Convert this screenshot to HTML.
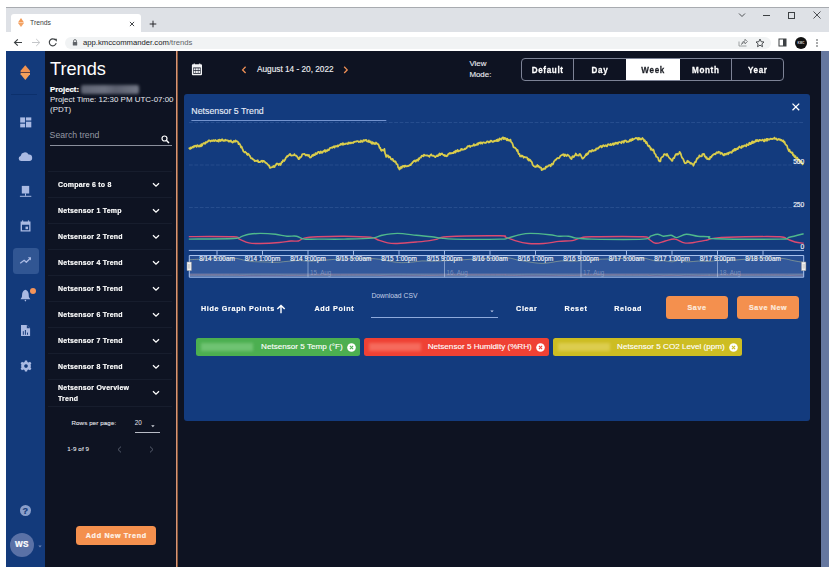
<!DOCTYPE html>
<html><head><meta charset="utf-8">
<style>
*{box-sizing:border-box;margin:0;padding:0}
html,body{width:838px;height:576px;overflow:hidden;background:#fff;font-family:"Liberation Sans",sans-serif}
.a{position:absolute}
.t{position:absolute;white-space:nowrap;line-height:1}
.b{font-weight:bold;-webkit-text-stroke:0.22px currentColor}
.m{-webkit-text-stroke:0.12px currentColor}
.sy{transform:scaleY(1.14);transform-origin:0 85%}
.sy2{transform:scaleY(1.1);transform-origin:0 85%;-webkit-text-stroke:0.16px currentColor}
</style></head><body>
<!-- window frame -->
<div class="a" style="left:6px;top:7px;width:823px;height:1px;background:#a8abb0"></div>
<div class="a" style="left:6px;top:8px;width:823px;height:24px;background:#dee1e6"></div>
<!-- tab -->
<div class="a" style="left:11px;top:14px;width:130px;height:18px;background:#fff;border-radius:3px 3px 0 0"></div>
<div class="a" style="left:6px;top:32px;width:823px;height:19.5px;background:#fff"></div>
<div class="a" style="left:64.5px;top:36.5px;width:706px;height:12.5px;background:#f1f3f4;border-radius:7px"></div>


<!-- tab content -->
<svg class="a" style="left:17px;top:17px" width="8" height="11" viewBox="0 0 8 11"><path d="M4 1 L7 5.4 L1 5.4 Z" fill="#f39a55"/><path d="M1 5.9 L7 5.9 L4 10 Z" fill="#f3a466"/></svg>
<div class="t" style="left:30px;top:19.5px;font-size:6.8px;color:#3c4043">Trends</div>
<svg class="a" style="left:129px;top:20.5px" width="6" height="6" viewBox="0 0 6 6"><path d="M0.9 0.9 L5.1 5.1 M5.1 0.9 L0.9 5.1" stroke="#3c4043" stroke-width="0.95"/></svg>
<svg class="a" style="left:148.5px;top:19.5px" width="8" height="8" viewBox="0 0 8 8"><path d="M4 0.7 V7.3 M0.7 4 H7.3" stroke="#202124" stroke-width="0.95"/></svg>
<!-- window controls -->
<svg class="a" style="left:738px;top:12px" width="8" height="6" viewBox="0 0 8 6"><path d="M1 1.5 L4 4.5 L7 1.5" stroke="#3c4043" stroke-width="0.9" fill="none"/></svg>
<div class="a" style="left:763px;top:15px;width:7px;height:1px;background:#3c4043"></div>
<div class="a" style="left:788px;top:11.5px;width:7px;height:7px;border:1px solid #3c4043"></div>
<svg class="a" style="left:813px;top:11px" width="8" height="8" viewBox="0 0 8 8"><path d="M0.5 0.5 L7.5 7.5 M7.5 0.5 L0.5 7.5" stroke="#3c4043" stroke-width="0.9"/></svg>
<!-- toolbar icons -->
<svg class="a" style="left:13px;top:38px" width="10" height="9" viewBox="0 0 10 9"><path d="M9 4.5 H1.8 M4.8 1.3 L1.5 4.5 L4.8 7.7" stroke="#3c4043" stroke-width="1.15" fill="none"/></svg>
<svg class="a" style="left:31px;top:38px" width="10" height="9" viewBox="0 0 10 9"><path d="M1 4.5 H8.5 M5.2 1 L8.8 4.5 L5.2 8" stroke="#c4c6c9" stroke-width="1" fill="none"/></svg>
<svg class="a" style="left:48px;top:37.5px" width="10" height="9" viewBox="0 0 10 9"><path d="M7.6 2.2 A3.5 3.5 0 1 0 8.2 5.2" stroke="#3c4043" stroke-width="1.15" fill="none"/><path d="M5.8 0.8 L8.8 0.8 L8.8 3.8 Z" fill="#3c4043"/></svg>
<svg class="a" style="left:71.5px;top:38.5px" width="6" height="7" viewBox="0 0 6 7"><path d="M1.6 3 V2 A1.4 1.4 0 0 1 4.4 2 V3" stroke="#5f6368" stroke-width="0.9" fill="none"/><rect x="0.8" y="3" width="4.4" height="3.6" rx="0.5" fill="#5f6368"/></svg>
<div class="t" style="left:83px;top:38.5px;font-size:7.7px;color:#202124">app.kmccommander.com<span style="color:#5f6368">/trends</span></div>
<svg class="a" style="left:738px;top:38px" width="10" height="9" viewBox="0 0 10 9"><path d="M1 3.5 V8 H8.5" stroke="#8a8d91" stroke-width="0.8" fill="none"/><path d="M3.5 6.5 Q4 3 7 3 V1.2 L9.4 3.6 L7 6 V4.3 Q5 4.3 3.5 6.5Z" stroke="#6e7174" stroke-width="0.8" fill="none"/></svg>
<svg class="a" style="left:755px;top:37.5px" width="10" height="10" viewBox="0 0 10 10"><path d="M5 1 L6.2 3.7 L9 4 L6.9 5.9 L7.5 8.7 L5 7.2 L2.5 8.7 L3.1 5.9 L1 4 L3.8 3.7 Z" stroke="#3c4043" stroke-width="0.9" fill="none" stroke-linejoin="round"/></svg>
<svg class="a" style="left:777.5px;top:38px" width="9" height="9" viewBox="0 0 9 9"><rect x="1" y="1" width="7" height="7" stroke="#3c4043" stroke-width="1" fill="none"/><rect x="5" y="1" width="3" height="7" fill="#3c4043"/></svg>
<div class="a" style="left:794.5px;top:36.5px;width:12px;height:12px;border-radius:50%;background:#111"></div>
<svg class="a" style="left:794.5px;top:36.5px" width="12" height="12" viewBox="0 0 12 12"><text x="6" y="7" font-family="Liberation Sans" font-size="3" font-weight="bold" fill="#d8d8d8" text-anchor="middle">KMC</text></svg>
<svg class="a" style="left:815px;top:37.5px" width="4" height="10" viewBox="0 0 4 10"><circle cx="2" cy="2" r="0.8" fill="#3c4043"/><circle cx="2" cy="5" r="0.8" fill="#3c4043"/><circle cx="2" cy="8" r="0.8" fill="#3c4043"/></svg>

<!-- page -->
<div class="a" style="left:6px;top:51px;width:823px;height:516px;background:#0e1322"></div>
<div class="a" style="left:6px;top:51px;width:39px;height:516px;background:#133a7b"></div>
<div class="a" style="left:176px;top:51px;width:1px;height:516px;background:#d4957a"></div><div class="a" style="left:177px;top:51px;width:1px;height:516px;background:#8a5535"></div>
<div class="a" style="left:821px;top:51px;width:8px;height:516px;background:#65779f"></div>
<div class="a" style="left:183.5px;top:93.5px;width:626.5px;height:327px;background:#133b7e;border-radius:3px"></div>

<!-- sidebar icons -->
<svg class="a" style="left:20px;top:65px" width="11" height="16" viewBox="0 0 11 16"><path d="M5.3 0.3 L10 5.8 V7.2 H0.6 V5.8 Z" fill="#f3934f"/><path d="M0.6 7.9 H10 V9.3 L5.3 14.9 L0.6 9.3 Z" fill="#f5a15c"/><rect x="0.6" y="7.1" width="9.4" height="0.85" fill="#6a4038"/></svg>
<div class="a" style="left:11px;top:94px;width:25.5px;height:1px;background:#0c306c"></div>
<svg class="a" style="left:20px;top:116.5px" width="12" height="11" viewBox="0 0 12 11"><g fill="#aabae3"><rect x="0.2" y="0.4" width="4.9" height="5.2"/><rect x="0.2" y="6.7" width="4.9" height="3.7"/><rect x="6" y="0.4" width="5.3" height="3.1"/><rect x="6" y="4.7" width="5.3" height="5.7"/></g></svg>
<svg class="a" style="left:18px;top:151px" width="15" height="11" viewBox="0 0 15 11"><path d="M3.2 10 A2.6 2.6 0 0 1 2.6 4.9 A4.3 4.3 0 0 1 10.6 3.6 A3.2 3.2 0 0 1 11.3 10 Z" fill="#aabae3"/></svg>
<svg class="a" style="left:19px;top:185px" width="13" height="13" viewBox="0 0 13 13"><g fill="#aabae3"><rect x="2.8" y="0.9" width="7.4" height="7.6"/><rect x="6" y="8.4" width="1" height="2.4"/><rect x="0.9" y="10.8" width="11.4" height="1"/></g></svg>
<svg class="a" style="left:20px;top:219.5px" width="11" height="12" viewBox="0 0 11 12"><path fill="#aabae3" fill-rule="evenodd" d="M0.6 1.4 H10.5 V11.5 H0.6 Z M2 4.8 V10.2 H9.2 V4.8 Z"/><rect x="2" y="0.4" width="1.2" height="1.5" fill="#aabae3"/><rect x="7.9" y="0.4" width="1.2" height="1.5" fill="#aabae3"/><rect x="5.5" y="6.6" width="2.5" height="2.6" fill="#aabae3"/></svg>
<div class="a" style="left:13px;top:248px;width:25.6px;height:26.2px;border-radius:3.5px;background:rgba(160,185,230,0.22)"></div>
<svg class="a" style="left:19px;top:256px" width="13" height="9" viewBox="0 0 13 9"><path d="M1.2 7.3 L5.2 4.3 L7.3 6.3 L11.3 2.2" stroke="#aabae3" stroke-width="1.3" fill="none" stroke-linejoin="round"/><path d="M8.8 1.3 L12 1.3 L12 4.5 Z" fill="#aabae3"/></svg>
<svg class="a" style="left:20px;top:289px" width="11" height="13" viewBox="0 0 11 13"><path d="M5.4 0.8 Q7.8 1.2 8.6 4.6 L8.9 8 L10.3 10.2 H0.5 L1.9 8 L2.2 4.6 Q3 1.2 5.4 0.8 Z" fill="#aabae3"/><circle cx="5.4" cy="11.6" r="0.8" fill="#aabae3"/></svg>
<div class="a" style="left:29.7px;top:288.1px;width:6px;height:6px;border-radius:50%;background:#f5945a"></div>
<svg class="a" style="left:20px;top:324px" width="11" height="13" viewBox="0 0 11 13"><path d="M1 1 H6.8 L10.1 4.3 V12 H1 Z" fill="#aabae3"/><path d="M6.8 1 V4.3 H10.1 Z" fill="#1b3f7e"/><rect x="2.8" y="7.2" width="1" height="3.6" fill="#1b3f7e"/><rect x="4.9" y="6" width="1" height="4.8" fill="#1b3f7e"/><rect x="7" y="8.6" width="1" height="2.2" fill="#1b3f7e"/></svg>
<svg class="a" style="left:19.5px;top:359.5px" width="12" height="12" viewBox="-6 -6 12 12"><path fill="#aabae3" fill-rule="evenodd" d="M-1.1 -5.6 H1.1 L1.4 -4.1 L2.6 -3.5 L4 -4.2 L5.4 -2.7 L4.6 -1.4 L4.9 0 L4.6 1.4 L5.4 2.7 L4 4.2 L2.6 3.5 L1.4 4.1 L1.1 5.6 H-1.1 L-1.4 4.1 L-2.6 3.5 L-4 4.2 L-5.4 2.7 L-4.6 1.4 L-4.9 0 L-4.6 -1.4 L-5.4 -2.7 L-4 -4.2 L-2.6 -3.5 L-1.4 -4.1 Z M0 -1.8 A1.8 1.8 0 1 0 0.01 -1.8 Z"/></svg>
<div class="a" style="left:19.9px;top:505px;width:11.2px;height:11.2px;border-radius:50%;background:#8a9fcb"></div>
<div class="t b" style="left:22.4px;top:506.6px;font-size:9px;color:#133a7b">?</div>
<div class="a" style="left:9.8px;top:533px;width:24px;height:24px;border-radius:50%;background:#5a71a6"></div>
<div class="t b" style="left:15px;top:541.3px;font-size:8.2px;color:#fff;letter-spacing:0.2px">WS</div>
<svg class="a" style="left:37.5px;top:545px" width="4" height="3" viewBox="0 0 4 3"><path d="M0.3 0.5 H3.7 L2 2.5Z" fill="#6f84b3"/></svg>

<div class="t" style="left:50px;top:60.19px;font-size:18.2px;color:#fff">Trends</div>
<div class="t b" style="left:50px;top:85.7px;font-size:7.8px;color:#fff">Project:</div>
<div class="a" style="left:80.5px;top:85px;width:58px;height:9px;background:linear-gradient(90deg,#5f6473,#6c7180 40%,#5a5f6e 60%,#737886);filter:blur(1.5px);border-radius:2px"></div>
<div class="t" style="left:50px;top:95.97px;font-size:7.95px;color:#e6e8ee">Project Time: 12:30 PM UTC-07:00</div>
<div class="t" style="left:50px;top:106.37px;font-size:7.95px;color:#e6e8ee">(PDT)</div>
<div class="t" style="left:49.6px;top:131.2px;font-size:8.7px;color:#9599a4">Search trend</div>
<svg class="a" style="left:160.5px;top:134.5px" width="9" height="9" viewBox="0 0 9 9"><circle cx="3.5" cy="3.5" r="2.5" stroke="#fff" stroke-width="1.2" fill="none"/><path d="M5.3 5.3 L8 8" stroke="#fff" stroke-width="1.5"/></svg>
<div class="a" style="left:50px;top:145px;width:122px;height:1px;background:#8a8f9c"></div>
<div class="a" style="left:47.5px;top:170.70px;width:124.5px;height:1px;background:#171d2d"></div>
<div class="a" style="left:47.5px;top:196.75px;width:124.5px;height:1px;background:#171d2d"></div>
<div class="a" style="left:47.5px;top:222.80px;width:124.5px;height:1px;background:#171d2d"></div>
<div class="a" style="left:47.5px;top:248.85px;width:124.5px;height:1px;background:#171d2d"></div>
<div class="a" style="left:47.5px;top:274.90px;width:124.5px;height:1px;background:#171d2d"></div>
<div class="a" style="left:47.5px;top:300.95px;width:124.5px;height:1px;background:#171d2d"></div>
<div class="a" style="left:47.5px;top:327.00px;width:124.5px;height:1px;background:#171d2d"></div>
<div class="a" style="left:47.5px;top:353.05px;width:124.5px;height:1px;background:#171d2d"></div>
<div class="a" style="left:47.5px;top:379.10px;width:124.5px;height:1px;background:#171d2d"></div>
<div class="a" style="left:47.5px;top:405.70px;width:124.5px;height:1px;background:#171d2d"></div>
<div class="t b sy2" style="left:58px;top:180.54px;font-size:7.0px;letter-spacing:0.22px;color:#fff">Compare 6 to 8</div>
<svg class="a" style="left:152px;top:182.00px" width="8" height="6" viewBox="0 0 8 6"><path d="M1 1.2 L4 4.2 L7 1.2" stroke="#fff" stroke-width="1.3" fill="none"/></svg>
<div class="t b sy2" style="left:58px;top:206.59px;font-size:7.0px;letter-spacing:0.22px;color:#fff">Netsensor 1 Temp</div>
<svg class="a" style="left:152px;top:208.05px" width="8" height="6" viewBox="0 0 8 6"><path d="M1 1.2 L4 4.2 L7 1.2" stroke="#fff" stroke-width="1.3" fill="none"/></svg>
<div class="t b sy2" style="left:58px;top:232.64px;font-size:7.0px;letter-spacing:0.22px;color:#fff">Netsensor 2 Trend</div>
<svg class="a" style="left:152px;top:234.10px" width="8" height="6" viewBox="0 0 8 6"><path d="M1 1.2 L4 4.2 L7 1.2" stroke="#fff" stroke-width="1.3" fill="none"/></svg>
<div class="t b sy2" style="left:58px;top:258.69px;font-size:7.0px;letter-spacing:0.22px;color:#fff">Netsensor 4 Trend</div>
<svg class="a" style="left:152px;top:260.15px" width="8" height="6" viewBox="0 0 8 6"><path d="M1 1.2 L4 4.2 L7 1.2" stroke="#fff" stroke-width="1.3" fill="none"/></svg>
<div class="t b sy2" style="left:58px;top:284.74px;font-size:7.0px;letter-spacing:0.22px;color:#fff">Netsensor 5 Trend</div>
<svg class="a" style="left:152px;top:286.20px" width="8" height="6" viewBox="0 0 8 6"><path d="M1 1.2 L4 4.2 L7 1.2" stroke="#fff" stroke-width="1.3" fill="none"/></svg>
<div class="t b sy2" style="left:58px;top:310.79px;font-size:7.0px;letter-spacing:0.22px;color:#fff">Netsensor 6 Trend</div>
<svg class="a" style="left:152px;top:312.25px" width="8" height="6" viewBox="0 0 8 6"><path d="M1 1.2 L4 4.2 L7 1.2" stroke="#fff" stroke-width="1.3" fill="none"/></svg>
<div class="t b sy2" style="left:58px;top:336.84px;font-size:7.0px;letter-spacing:0.22px;color:#fff">Netsensor 7 Trend</div>
<svg class="a" style="left:152px;top:338.30px" width="8" height="6" viewBox="0 0 8 6"><path d="M1 1.2 L4 4.2 L7 1.2" stroke="#fff" stroke-width="1.3" fill="none"/></svg>
<div class="t b sy2" style="left:58px;top:362.89px;font-size:7.0px;letter-spacing:0.22px;color:#fff">Netsensor 8 Trend</div>
<svg class="a" style="left:152px;top:364.35px" width="8" height="6" viewBox="0 0 8 6"><path d="M1 1.2 L4 4.2 L7 1.2" stroke="#fff" stroke-width="1.3" fill="none"/></svg>
<div class="t b sy2" style="left:58px;top:383.74px;font-size:7.0px;letter-spacing:0.22px;color:#fff">Netsensor Overview</div>
<div class="t b sy2" style="left:58px;top:395.24px;font-size:7.0px;letter-spacing:0.22px;color:#fff">Trend</div>
<svg class="a" style="left:152px;top:390.3px" width="8" height="6" viewBox="0 0 8 6"><path d="M1 1.2 L4 4.2 L7 1.2" stroke="#fff" stroke-width="1.3" fill="none"/></svg>
<div class="t" style="left:71.5px;top:420.2px;font-size:6.2px;letter-spacing:0.1px;color:#e8eaf0;-webkit-text-stroke:0.08px #e8eaf0">Rows per page:</div>
<div class="t" style="left:134.8px;top:419.98px;font-size:6.4px;color:#e8eaf0">20</div>
<svg class="a" style="left:151px;top:424.8px" width="4" height="3" viewBox="0 0 4 3"><path d="M0.2 0.3 H3.6 L1.9 2.2Z" fill="#d0d3da"/></svg>
<div class="a" style="left:134.5px;top:432px;width:25.2px;height:0.8px;background:#b8bcc6"></div>
<div class="t" style="left:67.2px;top:446px;font-size:6.2px;letter-spacing:0.12px;color:#e8eaf0;-webkit-text-stroke:0.08px #e8eaf0">1-9 of 9</div>
<svg class="a" style="left:116.5px;top:445.5px" width="5" height="7" viewBox="0 0 5 7"><path d="M4 0.6 L1 3.5 L4 6.4" stroke="#5f6575" stroke-width="0.9" fill="none"/></svg>
<svg class="a" style="left:148.7px;top:445.5px" width="5" height="7" viewBox="0 0 5 7"><path d="M1 0.6 L4 3.5 L1 6.4" stroke="#5f6575" stroke-width="0.9" fill="none"/></svg>
<div class="a" style="left:76.2px;top:525.8px;width:79.7px;height:19.4px;background:#f4904e;border-radius:3.5px"></div>
<div class="t b" style="left:85.7px;top:532.11px;font-size:7.2px;color:#fff3ea;letter-spacing:0.68px">Add New Trend</div>
<svg class="a" style="left:191px;top:62.5px" width="12" height="13" viewBox="0 0 12 13"><path fill="#f2f3f5" fill-rule="evenodd" d="M1.9 1.3 H10 Q11 1.3 11 2.3 V11.2 Q11 12.2 10 12.2 H1.9 Q0.9 12.2 0.9 11.2 V2.3 Q0.9 1.3 1.9 1.3 Z M2.2 4.6 V10.7 H9.7 V4.6 Z"/><rect x="2.6" y="0.6" width="1.4" height="1.2" fill="#f2f3f5"/><rect x="7.9" y="0.6" width="1.4" height="1.2" fill="#f2f3f5"/><g fill="#e8eaee"><rect x="2.7" y="5.3" width="1.9" height="2"/><rect x="5.0" y="5.3" width="1.9" height="2"/><rect x="7.3" y="5.3" width="1.9" height="2"/><rect x="2.7" y="8" width="1.9" height="2"/><rect x="5.0" y="8" width="1.9" height="2"/><rect x="7.3" y="8" width="1.9" height="2"/></g></svg>
<svg class="a" style="left:241px;top:65.5px" width="6" height="8" viewBox="0 0 6 8"><path d="M4.6 0.8 L1.6 3.9 L4.6 7" stroke="#ef9056" stroke-width="1.3" fill="none"/></svg>
<div class="t m" style="left:257px;top:65.62px;font-size:8.25px;color:#f0f1f4">August 14 - 20, 2022</div>
<svg class="a" style="left:343px;top:65.5px" width="6" height="8" viewBox="0 0 6 8"><path d="M1.2 0.8 L4.2 3.9 L1.2 7" stroke="#ef9056" stroke-width="1.3" fill="none"/></svg>
<div class="t m" style="left:469.4px;top:60.01px;font-size:7.9px;color:#e8eaf0">View</div>
<div class="t m" style="left:469.4px;top:71.21px;font-size:7.9px;color:#e8eaf0">Mode:</div>
<div class="a" style="left:521.2px;top:58.3px;width:262.5px;height:22.3px;border:1px solid #7d8396;border-radius:4px;overflow:hidden"><div class="a" style="left:104px;top:0;width:53.7px;height:22px;background:#fff"></div></div>
<div class="a" style="left:572.9px;top:58.5px;width:1px;height:22px;background:#7d8396"></div>
<div class="a" style="left:730.8px;top:58.5px;width:1px;height:22px;background:#7d8396"></div>
<div class="t b sy" style="left:521.3px;width:52.10000000000002px;text-align:center;top:66.74px;font-size:8.1px;letter-spacing:0.65px;text-indent:0.65px;color:#fff">Default</div>
<div class="t b sy" style="left:573.4px;width:52.60000000000002px;text-align:center;top:66.74px;font-size:8.1px;letter-spacing:0.65px;text-indent:0.65px;color:#fff">Day</div>
<div class="t b sy" style="left:626px;width:53.700000000000045px;text-align:center;top:66.74px;font-size:8.1px;letter-spacing:0.65px;text-indent:0.65px;color:#1c1f26">Week</div>
<div class="t b sy" style="left:679.7px;width:51.59999999999991px;text-align:center;top:66.74px;font-size:8.1px;letter-spacing:0.65px;text-indent:0.65px;color:#fff">Month</div>
<div class="t b sy" style="left:731.3px;width:52.40000000000009px;text-align:center;top:66.74px;font-size:8.1px;letter-spacing:0.65px;text-indent:0.65px;color:#fff">Year</div>
<div class="t m" style="left:191.3px;top:106.55px;font-size:8.8px;color:#e8eef9">Netsensor 5 Trend</div>
<!--CHART-->
<svg class="a" style="left:0;top:0" width="838" height="576" viewBox="0 0 838 576">
<g stroke="rgba(150,180,235,0.15)" stroke-width="1" stroke-dasharray="3.8 1.6" fill="none">
<path d="M189 122.5 H803.5"/><path d="M189 165 H803.5"/><path d="M189 207.5 H803.5"/>
</g>
<path d="M191.4 120.5 H386.3" stroke="#7d9dd8" stroke-width="0.9"/>
<path d="M188.8 236.6 C196.3 236.6 225.2 236.4 233.6 236.8 C242.0 237.2 236.8 238.1 239.3 239.1 C241.9 240.1 245.4 242.2 248.9 242.9 C252.4 243.6 255.2 243.6 260.3 243.5 C265.4 243.4 274.3 242.9 279.4 242.5 C284.5 242.1 287.7 241.2 290.9 241.0 C294.1 240.8 296.3 241.5 298.5 241.0 C300.7 240.5 301.0 238.8 304.2 238.1 C307.4 237.4 311.0 237.1 317.6 236.8 C324.2 236.5 335.2 236.1 344.0 236.2 C352.8 236.3 364.8 236.6 370.5 237.2 C376.2 237.8 375.3 239.1 378.2 240.0 C381.1 240.9 384.5 242.3 387.7 242.9 C390.9 243.5 392.5 243.7 397.3 243.5 C402.1 243.3 410.9 242.5 416.3 242.0 C421.7 241.5 426.2 241.1 429.7 240.6 C433.2 240.1 434.4 239.7 437.3 239.1 C440.2 238.5 436.4 237.4 446.9 236.8 C457.3 236.2 490.2 235.7 500.0 235.8 C509.8 235.9 503.0 236.4 505.5 237.2 C508.0 238.0 511.3 239.5 515.1 240.6 C518.9 241.7 523.7 243.0 528.5 243.5 C533.3 244.0 538.6 243.8 543.7 243.5 C548.8 243.2 554.2 241.9 559.0 241.4 C563.8 240.9 568.9 241.2 572.4 240.6 C575.9 240.0 576.8 238.7 580.0 238.1 C583.2 237.5 581.0 237.0 591.5 236.8 C602.0 236.6 633.5 236.4 643.0 236.8 C652.5 237.2 646.6 238.0 648.7 239.1 C650.8 240.2 652.9 243.0 655.7 243.3 C658.5 243.6 662.1 241.7 665.3 241.0 C668.5 240.3 671.6 238.8 674.8 239.1 C678.0 239.4 681.2 242.3 684.4 242.9 C687.6 243.5 690.1 243.0 693.9 242.5 C697.7 242.0 703.8 240.7 707.3 240.0 C710.8 239.3 708.5 238.6 714.9 238.1 C721.2 237.6 734.6 237.0 745.4 236.8 C756.2 236.6 772.8 236.4 779.8 236.8 C786.8 237.2 784.9 238.2 787.4 239.1 C789.9 240.0 792.3 241.3 795.0 242.0 C797.7 242.7 802.2 243.1 803.6 243.3" stroke="#dc4a70" stroke-width="1.4" fill="none"/>
<path d="M188.8 239.1 C196.3 239.0 224.8 238.9 233.6 238.5 C242.3 238.1 238.8 237.3 241.3 236.6 C243.9 235.9 245.7 234.8 248.9 234.3 C252.1 233.8 255.9 233.4 260.3 233.4 C264.8 233.4 271.2 233.8 275.6 234.3 C280.1 234.8 283.5 235.9 287.0 236.2 C290.5 236.5 293.7 235.7 296.6 236.2 C299.5 236.7 300.7 238.6 304.2 239.1 C307.7 239.6 311.0 239.1 317.6 239.1 C324.2 239.1 334.9 239.3 344.0 239.1 C353.1 238.9 366.1 238.7 372.4 238.1 C378.7 237.5 377.9 236.1 382.0 235.3 C386.1 234.5 391.6 233.4 397.3 233.4 C403.0 233.4 410.6 234.7 416.3 235.3 C422.0 235.9 427.5 236.3 431.6 236.8 C435.8 237.3 437.4 237.7 441.2 238.1 C445.0 238.5 444.7 238.9 454.5 239.1 C464.3 239.3 491.2 239.3 500.0 239.1 C508.8 238.9 504.4 238.8 507.5 238.1 C510.6 237.4 515.1 235.7 518.9 234.9 C522.7 234.1 525.3 233.4 530.4 233.4 C535.5 233.4 544.7 234.2 549.5 234.7 C554.3 235.2 555.8 235.9 559.0 236.2 C562.2 236.4 565.6 235.9 568.5 236.2 C571.4 236.5 572.4 237.6 576.2 238.1 C580.0 238.6 580.4 238.9 591.5 239.1 C602.6 239.3 633.1 239.6 643.0 239.1 C652.9 238.6 648.2 237.0 650.6 236.2 C653.0 235.4 655.5 234.3 657.6 234.3 C659.7 234.3 661.2 236.0 663.4 236.2 C665.6 236.4 668.8 235.1 671.0 235.3 C673.2 235.5 674.2 237.8 676.7 237.6 C679.2 237.4 682.8 234.5 686.3 234.3 C689.8 234.1 693.9 235.8 697.7 236.2 C701.5 236.6 706.3 236.4 709.2 236.8 C712.1 237.2 703.1 238.3 714.9 238.7 C726.7 239.1 767.4 239.3 779.8 239.1 C792.2 238.8 785.4 238.1 789.4 237.2 C793.4 236.3 801.2 234.3 803.6 233.7" stroke="#4fb88c" stroke-width="1.4" fill="none"/>
<path d="M188.8 148.8 L189.4 148.2 L190.0 149.0 L190.6 147.5 L191.2 148.3 L191.8 147.7 L192.4 146.8 L193.0 147.5 L193.6 146.2 L194.2 146.8 L194.8 145.8 L195.4 145.6 L196.0 146.1 L196.6 146.9 L197.2 145.2 L197.8 145.3 L198.4 146.1 L199.0 146.7 L199.6 145.7 L200.2 145.2 L200.8 146.4 L201.4 144.2 L202.0 145.8 L202.6 144.2 L203.2 143.5 L203.8 143.1 L204.4 143.2 L205.0 143.9 L205.6 142.2 L206.2 142.7 L206.8 142.5 L207.4 141.5 L208.0 141.6 L208.6 140.4 L209.2 140.3 L209.8 140.5 L210.4 141.5 L211.0 140.8 L211.6 140.5 L212.2 141.0 L212.8 140.6 L213.4 140.1 L214.0 141.1 L214.6 140.9 L215.2 139.9 L215.8 140.7 L216.4 140.6 L217.0 141.3 L217.6 141.0 L218.2 140.0 L218.8 141.6 L219.4 139.7 L220.0 140.3 L220.6 141.0 L221.2 139.6 L221.8 140.3 L222.4 139.3 L223.0 140.6 L223.6 140.8 L224.2 140.3 L224.8 140.9 L225.4 139.7 L226.0 140.5 L226.6 140.3 L227.2 140.4 L227.8 140.3 L228.4 141.3 L229.0 141.7 L229.6 140.8 L230.2 141.4 L230.8 140.3 L231.4 141.9 L232.0 141.8 L232.6 142.6 L233.2 142.2 L233.8 141.0 L234.4 141.2 L235.0 141.9 L235.6 140.4 L236.2 141.4 L236.8 141.1 L237.4 141.6 L238.0 142.0 L238.6 144.2 L239.2 143.4 L239.8 144.2 L240.4 145.4 L241.0 147.4 L241.6 146.6 L242.2 148.4 L242.8 149.6 L243.4 151.4 L244.0 151.9 L244.6 152.5 L245.2 151.7 L245.8 152.4 L246.4 152.8 L247.0 154.4 L247.6 155.0 L248.2 153.7 L248.8 154.4 L249.4 155.3 L250.0 156.1 L250.6 157.5 L251.2 158.5 L251.8 158.6 L252.4 158.4 L253.0 159.5 L253.6 159.6 L254.2 160.2 L254.8 161.2 L255.4 160.8 L256.0 160.6 L256.6 161.0 L257.2 161.3 L257.8 160.2 L258.4 162.1 L259.0 161.9 L259.6 162.2 L260.2 162.1 L260.8 161.2 L261.4 161.3 L262.0 160.7 L262.6 162.0 L263.2 160.8 L263.8 160.8 L264.4 161.5 L265.0 162.0 L265.6 162.9 L266.2 162.8 L266.8 163.3 L267.4 164.1 L268.0 164.6 L268.6 165.7 L269.2 165.5 L269.8 167.9 L270.4 167.9 L271.0 167.4 L271.6 167.4 L272.2 167.2 L272.8 166.8 L273.4 165.9 L274.0 167.1 L274.6 167.0 L275.2 165.4 L275.8 165.1 L276.4 163.8 L277.0 163.4 L277.6 163.9 L278.2 163.9 L278.8 165.2 L279.4 163.9 L280.0 163.7 L280.6 165.0 L281.2 163.4 L281.8 161.9 L282.4 162.1 L283.0 160.2 L283.6 160.7 L284.2 161.0 L284.8 160.1 L285.4 159.0 L286.0 157.4 L286.6 157.0 L287.2 155.9 L287.8 156.5 L288.4 155.3 L289.0 155.2 L289.6 154.2 L290.2 154.0 L290.8 155.3 L291.4 155.7 L292.0 155.4 L292.6 155.3 L293.2 155.3 L293.8 155.1 L294.4 154.1 L295.0 155.3 L295.6 155.6 L296.2 155.5 L296.8 156.1 L297.4 157.2 L298.0 157.8 L298.6 159.1 L299.2 159.0 L299.8 157.2 L300.4 157.5 L301.0 157.0 L301.6 156.2 L302.2 154.3 L302.8 154.0 L303.4 154.0 L304.0 153.9 L304.6 153.9 L305.2 154.9 L305.8 155.5 L306.4 155.3 L307.0 154.6 L307.6 155.1 L308.2 155.9 L308.8 154.8 L309.4 156.6 L310.0 157.6 L310.6 157.5 L311.2 157.0 L311.8 156.0 L312.4 155.0 L313.0 155.9 L313.6 154.5 L314.2 155.1 L314.8 155.1 L315.4 153.4 L316.0 153.1 L316.6 154.2 L317.2 153.5 L317.8 152.2 L318.4 151.9 L319.0 151.8 L319.6 153.3 L320.2 153.0 L320.8 151.4 L321.4 152.7 L322.0 152.9 L322.6 152.0 L323.2 151.2 L323.8 151.5 L324.4 150.4 L325.0 150.0 L325.6 151.9 L326.2 150.9 L326.8 150.3 L327.4 150.9 L328.0 149.5 L328.6 150.2 L329.2 149.8 L329.8 148.1 L330.4 147.9 L331.0 147.8 L331.6 147.4 L332.2 147.9 L332.8 147.0 L333.4 147.1 L334.0 146.2 L334.6 147.7 L335.2 146.2 L335.8 146.2 L336.4 146.2 L337.0 146.7 L337.6 145.4 L338.2 146.4 L338.8 145.3 L339.4 145.2 L340.0 145.1 L340.6 143.8 L341.2 144.6 L341.8 143.9 L342.4 143.3 L343.0 144.9 L343.6 143.4 L344.2 143.9 L344.8 144.3 L345.4 143.9 L346.0 143.3 L346.6 143.7 L347.2 143.7 L347.8 144.1 L348.4 142.5 L349.0 143.5 L349.6 142.6 L350.2 142.5 L350.8 143.4 L351.4 142.7 L352.0 142.6 L352.6 142.9 L353.2 143.0 L353.8 141.8 L354.4 142.0 L355.0 141.6 L355.6 141.5 L356.2 141.7 L356.8 141.1 L357.4 141.2 L358.0 141.1 L358.6 142.1 L359.2 141.5 L359.8 141.9 L360.4 142.0 L361.0 140.5 L361.6 141.1 L362.2 141.9 L362.8 141.7 L363.4 140.1 L364.0 140.1 L364.6 140.8 L365.2 140.0 L365.8 140.3 L366.4 140.0 L367.0 141.3 L367.6 141.5 L368.2 141.8 L368.8 140.4 L369.4 141.9 L370.0 142.1 L370.6 141.3 L371.2 143.2 L371.8 143.7 L372.4 142.1 L373.0 143.8 L373.6 142.7 L374.2 143.0 L374.8 144.1 L375.4 143.9 L376.0 142.5 L376.6 143.1 L377.2 143.9 L377.8 144.1 L378.4 144.4 L379.0 145.9 L379.6 147.9 L380.2 147.6 L380.8 149.9 L381.4 150.9 L382.0 149.7 L382.6 150.1 L383.2 150.6 L383.8 150.1 L384.4 148.8 L385.0 153.0 L385.6 154.7 L386.2 156.9 L386.8 155.2 L387.4 155.8 L388.0 155.5 L388.6 157.4 L389.2 156.6 L389.8 156.7 L390.4 157.8 L391.0 159.3 L391.6 159.6 L392.2 158.8 L392.8 159.0 L393.4 161.1 L394.0 160.9 L394.6 161.9 L395.2 161.3 L395.8 161.9 L396.4 164.0 L397.0 164.2 L397.6 164.6 L398.2 167.7 L398.8 168.2 L399.4 169.5 L400.0 167.5 L400.6 168.7 L401.2 166.6 L401.8 167.9 L402.4 166.5 L403.0 165.8 L403.6 166.1 L404.2 167.0 L404.8 165.7 L405.4 165.6 L406.0 166.6 L406.6 166.1 L407.2 166.0 L407.8 166.3 L408.4 165.9 L409.0 165.7 L409.6 165.3 L410.2 164.7 L410.8 165.1 L411.4 163.5 L412.0 163.4 L412.6 162.1 L413.2 162.0 L413.8 160.9 L414.4 161.2 L415.0 160.3 L415.6 161.6 L416.2 160.9 L416.8 159.8 L417.4 160.1 L418.0 160.8 L418.6 158.3 L419.2 159.3 L419.8 157.8 L420.4 157.3 L421.0 157.5 L421.6 155.9 L422.2 155.7 L422.8 155.9 L423.4 156.3 L424.0 154.6 L424.6 155.5 L425.2 155.3 L425.8 155.5 L426.4 155.4 L427.0 155.7 L427.6 155.4 L428.2 156.0 L428.8 155.9 L429.4 156.9 L430.0 155.5 L430.6 154.9 L431.2 154.3 L431.8 155.6 L432.4 155.7 L433.0 155.9 L433.6 155.6 L434.2 156.1 L434.8 156.8 L435.4 157.2 L436.0 156.1 L436.6 156.2 L437.2 155.2 L437.8 156.2 L438.4 155.7 L439.0 154.3 L439.6 153.5 L440.2 155.2 L440.8 153.8 L441.4 154.1 L442.0 153.4 L442.6 154.3 L443.2 154.8 L443.8 155.3 L444.4 155.0 L445.0 156.1 L445.6 155.4 L446.2 156.3 L446.8 155.7 L447.4 155.8 L448.0 154.4 L448.6 153.7 L449.2 153.8 L449.8 153.0 L450.4 153.5 L451.0 153.1 L451.6 153.4 L452.2 153.0 L452.8 152.9 L453.4 153.1 L454.0 151.8 L454.6 151.5 L455.2 152.7 L455.8 150.7 L456.4 151.7 L457.0 151.3 L457.6 149.8 L458.2 151.4 L458.8 151.3 L459.4 150.5 L460.0 150.5 L460.6 150.5 L461.2 148.8 L461.8 149.5 L462.4 149.2 L463.0 149.8 L463.6 149.5 L464.2 149.4 L464.8 148.6 L465.4 149.0 L466.0 148.3 L466.6 148.1 L467.2 146.8 L467.8 146.2 L468.4 146.1 L469.0 146.4 L469.6 145.6 L470.2 147.0 L470.8 146.1 L471.4 146.0 L472.0 145.9 L472.6 145.8 L473.2 145.3 L473.8 144.1 L474.4 145.7 L475.0 145.5 L475.6 144.8 L476.2 144.7 L476.8 144.9 L477.4 143.3 L478.0 144.6 L478.6 143.3 L479.2 142.6 L479.8 142.8 L480.4 143.6 L481.0 142.2 L481.6 143.2 L482.2 143.7 L482.8 142.6 L483.4 142.3 L484.0 142.4 L484.6 142.8 L485.2 143.0 L485.8 142.6 L486.4 142.6 L487.0 141.3 L487.6 141.4 L488.2 141.6 L488.8 142.6 L489.4 141.6 L490.0 142.0 L490.6 140.7 L491.2 140.7 L491.8 141.1 L492.4 141.9 L493.0 141.8 L493.6 141.7 L494.2 140.7 L494.8 141.1 L495.4 140.9 L496.0 140.8 L496.6 139.8 L497.2 141.2 L497.8 139.4 L498.4 140.9 L499.0 140.5 L499.6 138.3 L500.2 139.0 L500.8 139.5 L501.4 139.6 L502.0 138.2 L502.6 137.6 L503.2 137.3 L503.8 139.2 L504.4 137.8 L505.0 138.8 L505.6 138.1 L506.2 139.2 L506.8 140.3 L507.4 138.7 L508.0 140.4 L508.6 139.9 L509.2 140.8 L509.8 140.5 L510.4 139.6 L511.0 141.7 L511.6 142.4 L512.2 143.0 L512.8 144.6 L513.4 147.0 L514.0 147.4 L514.6 147.6 L515.2 147.8 L515.8 148.7 L516.4 149.2 L517.0 150.9 L517.6 149.9 L518.2 152.8 L518.8 154.1 L519.4 153.8 L520.0 156.3 L520.6 156.0 L521.2 156.6 L521.8 155.5 L522.4 155.9 L523.0 156.2 L523.6 157.8 L524.2 157.1 L524.8 156.9 L525.4 157.4 L526.0 157.4 L526.6 157.3 L527.2 157.7 L527.8 159.7 L528.4 158.9 L529.0 160.7 L529.6 159.5 L530.2 159.9 L530.8 161.1 L531.4 161.3 L532.0 162.6 L532.6 164.8 L533.2 165.5 L533.8 166.2 L534.4 166.3 L535.0 166.9 L535.6 167.0 L536.2 166.1 L536.8 166.5 L537.4 165.0 L538.0 166.5 L538.6 165.9 L539.2 167.0 L539.8 167.5 L540.4 167.4 L541.0 167.5 L541.6 170.1 L542.2 169.1 L542.8 169.7 L543.4 168.9 L544.0 168.3 L544.6 168.8 L545.2 168.8 L545.8 166.7 L546.4 167.3 L547.0 166.3 L547.6 166.6 L548.2 166.0 L548.8 165.3 L549.4 165.1 L550.0 165.0 L550.6 166.3 L551.2 164.9 L551.8 163.7 L552.4 164.6 L553.0 164.2 L553.6 162.4 L554.2 161.1 L554.8 160.6 L555.4 159.8 L556.0 159.8 L556.6 158.7 L557.2 158.5 L557.8 158.0 L558.4 158.1 L559.0 158.3 L559.6 157.5 L560.2 156.2 L560.8 155.6 L561.4 155.3 L562.0 154.9 L562.6 154.8 L563.2 154.2 L563.8 154.7 L564.4 156.2 L565.0 154.4 L565.6 155.2 L566.2 155.5 L566.8 156.0 L567.4 154.6 L568.0 155.1 L568.6 155.5 L569.2 156.2 L569.8 156.8 L570.4 158.3 L571.0 158.5 L571.6 159.0 L572.2 156.6 L572.8 156.1 L573.4 157.1 L574.0 157.0 L574.6 155.6 L575.2 155.3 L575.8 153.5 L576.4 154.4 L577.0 155.5 L577.6 155.3 L578.2 155.4 L578.8 155.6 L579.4 154.0 L580.0 153.9 L580.6 154.7 L581.2 156.2 L581.8 157.3 L582.4 158.6 L583.0 158.6 L583.6 157.8 L584.2 157.5 L584.8 156.2 L585.4 155.8 L586.0 154.1 L586.6 155.1 L587.2 153.3 L587.8 154.2 L588.4 153.0 L589.0 151.7 L589.6 150.8 L590.2 150.9 L590.8 151.6 L591.4 151.7 L592.0 150.2 L592.6 150.0 L593.2 150.9 L593.8 150.9 L594.4 150.4 L595.0 149.9 L595.6 150.4 L596.2 148.5 L596.8 148.6 L597.4 148.3 L598.0 148.8 L598.6 147.5 L599.2 147.6 L599.8 146.6 L600.4 146.0 L601.0 145.9 L601.6 147.4 L602.2 146.8 L602.8 145.8 L603.4 145.1 L604.0 146.0 L604.6 146.3 L605.2 145.7 L605.8 145.2 L606.4 146.0 L607.0 146.4 L607.6 144.7 L608.2 144.2 L608.8 144.7 L609.4 144.7 L610.0 145.1 L610.6 143.9 L611.2 145.1 L611.8 144.8 L612.4 144.1 L613.0 143.3 L613.6 144.9 L614.2 143.3 L614.8 144.2 L615.4 142.8 L616.0 142.6 L616.6 143.7 L617.2 142.6 L617.8 143.9 L618.4 142.8 L619.0 142.0 L619.6 142.0 L620.2 142.3 L620.8 142.7 L621.4 143.2 L622.0 141.3 L622.6 141.8 L623.2 141.3 L623.8 142.8 L624.4 140.9 L625.0 140.6 L625.6 140.5 L626.2 141.0 L626.8 142.0 L627.4 141.8 L628.0 141.3 L628.6 141.8 L629.2 141.5 L629.8 140.0 L630.4 139.5 L631.0 141.0 L631.6 140.4 L632.2 138.7 L632.8 140.0 L633.4 139.2 L634.0 139.0 L634.6 138.8 L635.2 138.3 L635.8 137.8 L636.4 138.2 L637.0 138.2 L637.6 139.5 L638.2 137.8 L638.8 139.7 L639.4 138.1 L640.0 138.5 L640.6 139.5 L641.2 139.6 L641.8 138.8 L642.4 138.0 L643.0 139.0 L643.6 139.3 L644.2 141.2 L644.8 140.3 L645.4 141.4 L646.0 143.2 L646.6 142.0 L647.2 143.7 L647.8 145.5 L648.4 146.3 L649.0 145.6 L649.6 146.5 L650.2 147.5 L650.8 149.7 L651.4 148.5 L652.0 149.8 L652.6 150.4 L653.2 149.4 L653.8 150.4 L654.4 153.2 L655.0 153.8 L655.6 154.3 L656.2 156.7 L656.8 156.7 L657.4 157.4 L658.0 157.6 L658.6 160.0 L659.2 161.2 L659.8 161.4 L660.4 161.3 L661.0 158.1 L661.6 157.5 L662.2 156.9 L662.8 156.9 L663.4 155.8 L664.0 154.4 L664.6 154.1 L665.2 154.4 L665.8 154.6 L666.4 155.5 L667.0 153.9 L667.6 155.3 L668.2 156.1 L668.8 157.2 L669.4 158.0 L670.0 158.6 L670.6 158.9 L671.2 159.9 L671.8 160.9 L672.4 160.9 L673.0 158.5 L673.6 157.9 L674.2 158.2 L674.8 156.3 L675.4 155.0 L676.0 154.1 L676.6 154.7 L677.2 153.7 L677.8 154.7 L678.4 154.0 L679.0 153.7 L679.6 151.9 L680.2 152.7 L680.8 153.9 L681.4 156.0 L682.0 157.7 L682.6 158.3 L683.2 159.0 L683.8 160.6 L684.4 162.3 L685.0 163.3 L685.6 163.1 L686.2 163.0 L686.8 162.2 L687.4 160.7 L688.0 162.0 L688.6 161.3 L689.2 162.4 L689.8 162.4 L690.4 163.7 L691.0 162.9 L691.6 163.5 L692.2 164.0 L692.8 164.2 L693.4 165.8 L694.0 164.2 L694.6 162.6 L695.2 161.8 L695.8 162.1 L696.4 160.0 L697.0 158.4 L697.6 158.7 L698.2 157.4 L698.8 157.4 L699.4 155.3 L700.0 155.9 L700.6 156.4 L701.2 156.3 L701.8 156.2 L702.4 154.1 L703.0 154.5 L703.6 153.9 L704.2 154.1 L704.8 156.6 L705.4 156.4 L706.0 157.8 L706.6 157.3 L707.2 159.1 L707.8 158.8 L708.4 158.7 L709.0 159.4 L709.6 159.2 L710.2 156.9 L710.8 157.5 L711.4 157.1 L712.0 155.7 L712.6 155.5 L713.2 154.5 L713.8 154.2 L714.4 153.9 L715.0 154.4 L715.6 154.2 L716.2 152.9 L716.8 152.2 L717.4 152.6 L718.0 153.0 L718.6 151.7 L719.2 152.0 L719.8 152.1 L720.4 153.8 L721.0 153.6 L721.6 152.9 L722.2 153.4 L722.8 154.4 L723.4 155.1 L724.0 155.4 L724.6 153.9 L725.2 153.8 L725.8 154.7 L726.4 153.9 L727.0 153.3 L727.6 153.1 L728.2 154.3 L728.8 152.6 L729.4 152.9 L730.0 152.2 L730.6 152.1 L731.2 152.8 L731.8 152.7 L732.4 151.0 L733.0 150.3 L733.6 151.1 L734.2 149.6 L734.8 148.8 L735.4 150.4 L736.0 149.0 L736.6 149.5 L737.2 148.3 L737.8 149.0 L738.4 147.8 L739.0 147.0 L739.6 146.5 L740.2 147.5 L740.8 147.5 L741.4 147.9 L742.0 145.9 L742.6 146.9 L743.2 146.1 L743.8 146.3 L744.4 145.3 L745.0 145.4 L745.6 145.7 L746.2 146.3 L746.8 144.2 L747.4 144.7 L748.0 145.1 L748.6 145.1 L749.2 143.1 L749.8 142.7 L750.4 144.2 L751.0 143.9 L751.6 142.6 L752.2 141.4 L752.8 143.1 L753.4 141.6 L754.0 142.5 L754.6 141.6 L755.2 141.8 L755.8 140.1 L756.4 141.3 L757.0 139.9 L757.6 140.3 L758.2 141.3 L758.8 141.2 L759.4 139.8 L760.0 139.9 L760.6 140.3 L761.2 140.5 L761.8 140.2 L762.4 139.7 L763.0 139.9 L763.6 141.0 L764.2 141.4 L764.8 139.4 L765.4 140.4 L766.0 140.7 L766.6 138.9 L767.2 140.6 L767.8 138.8 L768.4 139.7 L769.0 139.5 L769.6 139.5 L770.2 138.7 L770.8 138.9 L771.4 139.1 L772.0 138.7 L772.6 139.2 L773.2 138.7 L773.8 138.6 L774.4 137.6 L775.0 138.9 L775.6 138.8 L776.2 138.4 L776.8 139.7 L777.4 140.0 L778.0 139.4 L778.6 139.0 L779.2 139.8 L779.8 139.2 L780.4 139.5 L781.0 140.4 L781.6 139.9 L782.2 140.9 L782.8 141.3 L783.4 140.5 L784.0 142.4 L784.6 141.9 L785.2 144.0 L785.8 144.8 L786.4 145.1 L787.0 145.6 L787.6 148.1 L788.2 149.3 L788.8 151.0 L789.4 149.6 L790.0 151.6 L790.6 152.3 L791.2 152.1 L791.8 153.1 L792.4 152.5 L793.0 155.0 L793.6 154.6 L794.2 156.4 L794.8 157.1 L795.4 156.1 L796.0 158.0 L796.6 158.9 L797.2 157.6 L797.8 158.9 L798.4 160.4 L799.0 159.6 L799.6 161.7 L800.2 160.9 L800.8 162.6 L801.4 161.6 L802.0 162.9 L802.6 164.3 L803.2 163.2" stroke="#dacd4c" stroke-width="1.75" fill="none" stroke-linejoin="round"/>
<g font-family="Liberation Sans" font-size="6.7" fill="#f4f6fa" stroke="#f4f6fa" stroke-width="0.15" text-anchor="end"><text x="804.3" y="164.3">500</text><text x="804.3" y="207.3">250</text><text x="804.3" y="249.4">0</text></g>
<!-- axis -->
<path d="M188.8 250.4 H804" stroke="#a4bde8" stroke-width="1"/>
<g stroke="#a4bde8" stroke-width="1"><path d="M217.0 250.3 V254.8" /><path d="M262.5 250.3 V254.8" /><path d="M308.0 250.3 V254.8" /><path d="M353.5 250.3 V254.8" /><path d="M399.0 250.3 V254.8" /><path d="M444.5 250.3 V254.8" /><path d="M490.0 250.3 V254.8" /><path d="M535.5 250.3 V254.8" /><path d="M581.0 250.3 V254.8" /><path d="M626.5 250.3 V254.8" /><path d="M672.0 250.3 V254.8" /><path d="M717.5 250.3 V254.8" /><path d="M763.0 250.3 V254.8" /></g>
<!-- navigator -->
<rect x="189.3" y="255.5" width="614.4" height="21.7" fill="rgba(102,140,210,0.24)"/>
<path d="M188.8 259.8 C191.0 259.6 197.7 259.3 201.9 259.1 C206.1 258.8 209.7 258.4 213.8 258.3 C217.9 258.1 222.6 258.1 226.4 258.2 C230.2 258.2 233.6 258.1 236.5 258.4 C239.4 258.7 241.1 259.6 243.7 260.1 C246.3 260.6 248.6 261.2 252.0 261.5 C255.4 261.8 259.8 261.8 264.0 261.9 C268.2 262.1 273.8 262.4 277.1 262.3 C280.4 262.3 280.7 262.0 283.6 261.7 C286.5 261.5 291.2 260.9 294.3 260.7 C297.4 260.5 299.4 260.6 302.1 260.7 C304.8 260.8 306.5 261.2 310.4 261.1 C314.3 261.0 320.8 260.4 325.3 260.1 C329.8 259.7 333.3 259.4 337.3 259.2 C341.3 258.9 344.8 258.9 349.2 258.7 C353.6 258.6 359.7 258.3 363.5 258.3 C367.3 258.3 369.4 258.5 371.9 258.6 C374.4 258.8 376.3 258.8 378.4 259.1 C380.5 259.3 382.6 259.5 384.4 259.9 C386.2 260.2 387.0 260.7 389.1 261.1 C391.2 261.5 394.5 262.1 396.9 262.3 C399.3 262.6 400.7 262.7 403.4 262.6 C406.1 262.6 409.9 262.3 413.0 262.0 C416.1 261.7 419.3 261.1 421.9 260.9 C424.5 260.7 426.3 261.1 428.5 261.1 C430.7 261.2 432.7 261.3 435.1 261.2 C437.5 261.1 440.3 260.8 442.8 260.7 C445.3 260.6 446.4 260.7 450.0 260.5 C453.6 260.3 459.8 259.9 464.3 259.7 C468.8 259.4 472.7 259.1 476.8 258.9 C480.9 258.8 484.3 258.7 488.7 258.5 C493.1 258.3 499.3 257.9 503.0 257.8 C506.7 257.8 508.4 257.9 510.8 258.2 C513.2 258.6 515.0 259.5 517.3 260.0 C519.6 260.4 521.7 260.7 524.5 261.1 C527.3 261.6 531.1 262.3 534.1 262.7 C537.1 263.0 539.6 263.4 542.4 263.4 C545.2 263.3 547.6 263.0 550.8 262.5 C554.0 262.1 558.0 261.0 561.5 260.8 C565.0 260.6 568.5 261.3 571.6 261.3 C574.7 261.3 576.9 260.9 579.9 260.7 C582.9 260.5 586.3 260.4 589.5 260.2 C592.7 259.9 594.6 259.6 599.0 259.3 C603.4 259.1 610.1 258.9 615.7 258.7 C621.3 258.5 627.8 258.2 632.4 258.1 C637.0 258.0 640.2 257.8 643.2 258.0 C646.2 258.3 648.1 259.2 650.3 259.7 C652.5 260.2 654.1 260.8 656.3 261.0 C658.5 261.2 660.9 260.6 663.5 260.7 C666.1 260.8 669.1 261.9 671.8 261.8 C674.5 261.8 676.8 260.3 679.5 260.3 C682.2 260.3 684.7 261.7 687.9 261.8 C691.1 262.0 695.2 261.1 698.6 261.0 C702.0 261.0 704.8 261.6 708.2 261.5 C711.6 261.4 715.1 260.5 718.9 260.3 C722.7 260.1 726.4 260.5 730.8 260.3 C735.2 260.1 741.0 259.5 745.3 259.2 C749.6 258.8 752.6 258.5 756.7 258.3 C760.8 258.1 766.3 258.0 770.1 258.0 C773.9 258.0 776.9 258.0 779.6 258.2 C782.3 258.3 784.4 258.7 786.3 259.0 C788.2 259.3 789.0 259.7 791.1 260.2 C793.2 260.6 796.6 261.3 798.7 261.6 C800.8 262.0 802.8 262.2 803.6 262.3 L803.7 277.2 L189.3 277.2 Z" fill="rgba(120,150,210,0.16)"/>
<path d="M188.8 259.8 C191.0 259.6 197.7 259.3 201.9 259.1 C206.1 258.8 209.7 258.4 213.8 258.3 C217.9 258.1 222.6 258.1 226.4 258.2 C230.2 258.2 233.6 258.1 236.5 258.4 C239.4 258.7 241.1 259.6 243.7 260.1 C246.3 260.6 248.6 261.2 252.0 261.5 C255.4 261.8 259.8 261.8 264.0 261.9 C268.2 262.1 273.8 262.4 277.1 262.3 C280.4 262.3 280.7 262.0 283.6 261.7 C286.5 261.5 291.2 260.9 294.3 260.7 C297.4 260.5 299.4 260.6 302.1 260.7 C304.8 260.8 306.5 261.2 310.4 261.1 C314.3 261.0 320.8 260.4 325.3 260.1 C329.8 259.7 333.3 259.4 337.3 259.2 C341.3 258.9 344.8 258.9 349.2 258.7 C353.6 258.6 359.7 258.3 363.5 258.3 C367.3 258.3 369.4 258.5 371.9 258.6 C374.4 258.8 376.3 258.8 378.4 259.1 C380.5 259.3 382.6 259.5 384.4 259.9 C386.2 260.2 387.0 260.7 389.1 261.1 C391.2 261.5 394.5 262.1 396.9 262.3 C399.3 262.6 400.7 262.7 403.4 262.6 C406.1 262.6 409.9 262.3 413.0 262.0 C416.1 261.7 419.3 261.1 421.9 260.9 C424.5 260.7 426.3 261.1 428.5 261.1 C430.7 261.2 432.7 261.3 435.1 261.2 C437.5 261.1 440.3 260.8 442.8 260.7 C445.3 260.6 446.4 260.7 450.0 260.5 C453.6 260.3 459.8 259.9 464.3 259.7 C468.8 259.4 472.7 259.1 476.8 258.9 C480.9 258.8 484.3 258.7 488.7 258.5 C493.1 258.3 499.3 257.9 503.0 257.8 C506.7 257.8 508.4 257.9 510.8 258.2 C513.2 258.6 515.0 259.5 517.3 260.0 C519.6 260.4 521.7 260.7 524.5 261.1 C527.3 261.6 531.1 262.3 534.1 262.7 C537.1 263.0 539.6 263.4 542.4 263.4 C545.2 263.3 547.6 263.0 550.8 262.5 C554.0 262.1 558.0 261.0 561.5 260.8 C565.0 260.6 568.5 261.3 571.6 261.3 C574.7 261.3 576.9 260.9 579.9 260.7 C582.9 260.5 586.3 260.4 589.5 260.2 C592.7 259.9 594.6 259.6 599.0 259.3 C603.4 259.1 610.1 258.9 615.7 258.7 C621.3 258.5 627.8 258.2 632.4 258.1 C637.0 258.0 640.2 257.8 643.2 258.0 C646.2 258.3 648.1 259.2 650.3 259.7 C652.5 260.2 654.1 260.8 656.3 261.0 C658.5 261.2 660.9 260.6 663.5 260.7 C666.1 260.8 669.1 261.9 671.8 261.8 C674.5 261.8 676.8 260.3 679.5 260.3 C682.2 260.3 684.7 261.7 687.9 261.8 C691.1 262.0 695.2 261.1 698.6 261.0 C702.0 261.0 704.8 261.6 708.2 261.5 C711.6 261.4 715.1 260.5 718.9 260.3 C722.7 260.1 726.4 260.5 730.8 260.3 C735.2 260.1 741.0 259.5 745.3 259.2 C749.6 258.8 752.6 258.5 756.7 258.3 C760.8 258.1 766.3 258.0 770.1 258.0 C773.9 258.0 776.9 258.0 779.6 258.2 C782.3 258.3 784.4 258.7 786.3 259.0 C788.2 259.3 789.0 259.7 791.1 260.2 C793.2 260.6 796.6 261.3 798.7 261.6 C800.8 262.0 802.8 262.2 803.6 262.3" stroke="rgba(190,200,150,0.55)" stroke-width="0.9" fill="none"/>
<rect x="189.3" y="273.3" width="614.4" height="3" fill="rgba(150,150,175,0.38)"/>
<path d="M188.8 274.8 C196.3 274.8 225.2 274.8 233.6 274.9 C242.0 274.9 236.8 275.1 239.3 275.3 C241.9 275.4 245.4 275.8 248.9 275.9 C252.4 276.1 255.2 276.0 260.3 276.0 C265.4 276.0 274.3 275.9 279.4 275.9 C284.5 275.8 287.7 275.6 290.9 275.6 C294.1 275.6 296.3 275.7 298.5 275.6 C300.7 275.5 301.0 275.2 304.2 275.1 C307.4 275.0 311.0 274.9 317.6 274.9 C324.2 274.8 335.2 274.8 344.0 274.8 C352.8 274.8 364.8 274.8 370.5 274.9 C376.2 275.0 375.3 275.3 378.2 275.4 C381.1 275.6 384.5 275.8 387.7 275.9 C390.9 276.0 392.5 276.1 397.3 276.0 C402.1 276.0 410.9 275.9 416.3 275.8 C421.7 275.7 426.2 275.6 429.7 275.5 C433.2 275.4 434.4 275.4 437.3 275.3 C440.2 275.2 436.4 275.0 446.9 274.9 C457.3 274.8 490.2 274.7 500.0 274.7 C509.8 274.7 503.0 274.8 505.5 274.9 C508.0 275.1 511.3 275.3 515.1 275.5 C518.9 275.7 523.7 275.9 528.5 276.0 C533.3 276.1 538.6 276.1 543.7 276.0 C548.8 276.0 554.2 275.7 559.0 275.7 C563.8 275.6 568.9 275.6 572.4 275.5 C575.9 275.4 576.8 275.2 580.0 275.1 C583.2 275.0 581.0 274.9 591.5 274.9 C602.0 274.8 633.5 274.8 643.0 274.9 C652.5 274.9 646.6 275.1 648.7 275.3 C650.8 275.5 652.9 275.9 655.7 276.0 C658.5 276.0 662.1 275.7 665.3 275.6 C668.5 275.5 671.6 275.2 674.8 275.3 C678.0 275.3 681.2 275.8 684.4 275.9 C687.6 276.0 690.1 275.9 693.9 275.9 C697.7 275.8 703.8 275.5 707.3 275.4 C710.8 275.3 708.5 275.2 714.9 275.1 C721.2 275.0 734.6 274.9 745.4 274.9 C756.2 274.8 772.8 274.8 779.8 274.9 C786.8 274.9 784.9 275.1 787.4 275.3 C789.9 275.4 792.3 275.6 795.0 275.8 C797.7 275.9 802.2 276.0 803.6 276.0" stroke="rgba(190,130,150,0.35)" stroke-width="1" fill="none"/>
<path d="M188.8 275.3 C196.3 275.3 224.8 275.2 233.6 275.2 C242.3 275.1 238.8 275.0 241.3 274.8 C243.9 274.7 245.7 274.5 248.9 274.4 C252.1 274.3 255.9 274.3 260.3 274.3 C264.8 274.3 271.2 274.4 275.6 274.4 C280.1 274.5 283.5 274.7 287.0 274.8 C290.5 274.8 293.7 274.7 296.6 274.8 C299.5 274.9 300.7 275.2 304.2 275.3 C307.7 275.4 311.0 275.3 317.6 275.3 C324.2 275.3 334.9 275.3 344.0 275.3 C353.1 275.2 366.1 275.2 372.4 275.1 C378.7 275.0 377.9 274.7 382.0 274.6 C386.1 274.5 391.6 274.3 397.3 274.3 C403.0 274.3 410.6 274.5 416.3 274.6 C422.0 274.7 427.5 274.8 431.6 274.9 C435.8 275.0 437.4 275.0 441.2 275.1 C445.0 275.2 444.7 275.2 454.5 275.3 C464.3 275.3 491.2 275.3 500.0 275.3 C508.8 275.2 504.4 275.2 507.5 275.1 C510.6 275.0 515.1 274.7 518.9 274.5 C522.7 274.4 525.3 274.3 530.4 274.3 C535.5 274.3 544.7 274.4 549.5 274.5 C554.3 274.6 555.8 274.7 559.0 274.8 C562.2 274.8 565.6 274.7 568.5 274.8 C571.4 274.8 572.4 275.0 576.2 275.1 C580.0 275.2 580.4 275.2 591.5 275.3 C602.6 275.3 633.1 275.4 643.0 275.3 C652.9 275.2 648.2 274.9 650.6 274.8 C653.0 274.6 655.5 274.4 657.6 274.4 C659.7 274.4 661.2 274.7 663.4 274.8 C665.6 274.8 668.8 274.6 671.0 274.6 C673.2 274.7 674.2 275.0 676.7 275.0 C679.2 275.0 682.8 274.5 686.3 274.4 C689.8 274.4 693.9 274.7 697.7 274.8 C701.5 274.8 706.3 274.8 709.2 274.9 C712.1 274.9 703.1 275.1 714.9 275.2 C726.7 275.3 767.4 275.3 779.8 275.3 C792.2 275.2 785.4 275.1 789.4 274.9 C793.4 274.8 801.2 274.4 803.6 274.3" stroke="rgba(150,170,170,0.3)" stroke-width="1" fill="none"/>
<g stroke="rgba(200,215,240,0.6)" stroke-width="0.9"><path d="M308.0 255.5 V277.2"/><path d="M444.5 255.5 V277.2"/><path d="M581.0 255.5 V277.2"/><path d="M717.5 255.5 V277.2"/></g>
<g font-family="Liberation Sans" font-size="6.3" fill="rgba(200,210,230,0.45)"><text x="310.0" y="275.4">15. Aug</text><text x="446.5" y="275.4">16. Aug</text><text x="583.0" y="275.4">17. Aug</text><text x="719.5" y="275.4">18. Aug</text></g>
<path d="M189.3 255.5 H803.7 V277.2 H189.3 Z" stroke="#a8c2ee" stroke-width="1" fill="none"/>
<g font-family="Liberation Sans" font-size="6.4" fill="#f4f6fa" stroke="#f4f6fa" stroke-width="0.12" text-anchor="middle"><text x="217.0" y="260.6">8/14 5:00am</text><text x="262.5" y="260.6">8/14 1:00pm</text><text x="308.0" y="260.6">8/14 9:00pm</text><text x="353.5" y="260.6">8/15 5:00am</text><text x="399.0" y="260.6">8/15 1:00pm</text><text x="444.5" y="260.6">8/15 9:00pm</text><text x="490.0" y="260.6">8/16 5:00am</text><text x="535.5" y="260.6">8/16 1:00pm</text><text x="581.0" y="260.6">8/16 9:00pm</text><text x="626.5" y="260.6">8/17 5:00am</text><text x="672.0" y="260.6">8/17 1:00pm</text><text x="717.5" y="260.6">8/17 9:00pm</text><text x="763.0" y="260.6">8/18 5:00am</text></g>
<g><rect x="187" y="262" width="4.4" height="8.6" fill="#f2f2f2" stroke="#999" stroke-width="0.5"/><path d="M188.6 264 V268.6 M189.8 264 V268.6" stroke="#aaa" stroke-width="0.5"/></g>
<g><rect x="801.5" y="262" width="4.4" height="8.6" fill="#f2f2f2" stroke="#999" stroke-width="0.5"/><path d="M803.1 264 V268.6 M804.3 264 V268.6" stroke="#aaa" stroke-width="0.5"/></g>
<path d="M792.5 103.6 L799.2 110.3 M799.2 103.6 L792.5 110.3" stroke="#fff" stroke-width="1.3"/>
</svg>
<!--/CHART-->
<div class="t b sy2" style="left:201px;top:305.27px;font-size:7.2px;color:#fff;letter-spacing:0.66px">Hide Graph Points</div>
<svg class="a" style="left:276px;top:303.5px" width="10" height="10" viewBox="0 0 10 10"><path d="M5 9.2 V1.6 M1.3 5.1 L5 1.4 L8.7 5.1" stroke="#fff" stroke-width="1.4" fill="none"/></svg>
<div class="t b sy2" style="left:314.4px;top:305.17px;font-size:7.2px;color:#fff;letter-spacing:0.66px">Add Point</div>
<div class="t" style="left:371.4px;top:293.14px;font-size:6.8px;color:#c5d0e8">Download CSV</div>
<div class="a" style="left:371.4px;top:316.5px;width:126.2px;height:1px;background:#8eaadc"></div>
<svg class="a" style="left:490px;top:309.5px" width="4" height="3" viewBox="0 0 4 3"><path d="M0.3 0.4 H3.7 L2 2.2Z" fill="#b8c6e6"/></svg>
<div class="t b sy2" style="left:516.1px;top:304.57px;font-size:7.2px;color:#fff;letter-spacing:0.66px">Clear</div>
<div class="t b sy2" style="left:564.6px;top:304.57px;font-size:7.2px;color:#fff;letter-spacing:0.66px">Reset</div>
<div class="t b sy2" style="left:614.2px;top:304.57px;font-size:7.2px;color:#fff;letter-spacing:0.66px">Reload</div>
<div class="a" style="left:665.7px;top:296.1px;width:62.1px;height:22.9px;background:#f4904e;border-radius:3.5px"></div>
<div class="a" style="left:736.7px;top:296.1px;width:62.3px;height:22.9px;background:#f4904e;border-radius:3.5px"></div>
<div class="t b" style="left:665.7px;width:62.1px;text-align:center;top:303.71px;font-size:7.2px;color:#fde9dc;letter-spacing:0.6px;text-indent:0.6px">Save</div>
<div class="t b" style="left:736.7px;width:62.3px;text-align:center;top:303.71px;font-size:7.2px;color:#fde9dc;letter-spacing:0.6px;text-indent:0.6px">Save New</div>
<div class="a" style="left:196.3px;top:337.8px;width:163.6px;height:17.8px;background:#4caf50;border-radius:2.5px"></div>
<div class="a" style="left:201.3px;top:342.5px;width:52.1px;height:8.5px;background:#6fc372;filter:blur(1.5px)"></div>
<div class="t m" style="left:42.6px;width:300px;text-align:right;top:343.4px;font-size:8.12px;color:#fff">Netsensor 5 Temp (°F)</div>
<svg class="a" style="left:346.6px;top:342.5px" width="9" height="9" viewBox="0 0 9 9"><circle cx="4.5" cy="4.5" r="4.3" fill="#fff"/><path d="M2.9 2.9 L6.1 6.1 M6.1 2.9 L2.9 6.1" stroke="#4caf50" stroke-width="1.1"/></svg>
<div class="a" style="left:364.3px;top:337.8px;width:184.4px;height:17.8px;background:#ef4134;border-radius:2.5px"></div>
<div class="a" style="left:369.3px;top:342.5px;width:52.1px;height:8.5px;background:#f56a5c;filter:blur(1.5px)"></div>
<div class="t m" style="left:231.8px;width:300px;text-align:right;top:343.4px;font-size:8.12px;color:#fff">Netsensor 5 Humidity (%RH)</div>
<svg class="a" style="left:535.5px;top:342.5px" width="9" height="9" viewBox="0 0 9 9"><circle cx="4.5" cy="4.5" r="4.3" fill="#fff"/><path d="M2.9 2.9 L6.1 6.1 M6.1 2.9 L2.9 6.1" stroke="#ef4134" stroke-width="1.1"/></svg>
<div class="a" style="left:553.3px;top:337.8px;width:188.4px;height:17.8px;background:#cdbd22;border-radius:2.5px"></div>
<div class="a" style="left:558.3px;top:342.5px;width:52.1px;height:8.5px;background:#dccd4e;filter:blur(1.5px)"></div>
<div class="t m" style="left:424.8px;width:300px;text-align:right;top:343.4px;font-size:8.12px;color:#fff">Netsensor 5 CO2 Level (ppm)</div>
<svg class="a" style="left:728.7px;top:342.5px" width="9" height="9" viewBox="0 0 9 9"><circle cx="4.5" cy="4.5" r="4.3" fill="#fff"/><path d="M2.9 2.9 L6.1 6.1 M6.1 2.9 L2.9 6.1" stroke="#cdbd22" stroke-width="1.1"/></svg>
<!--CONTENT-->
</body></html>
